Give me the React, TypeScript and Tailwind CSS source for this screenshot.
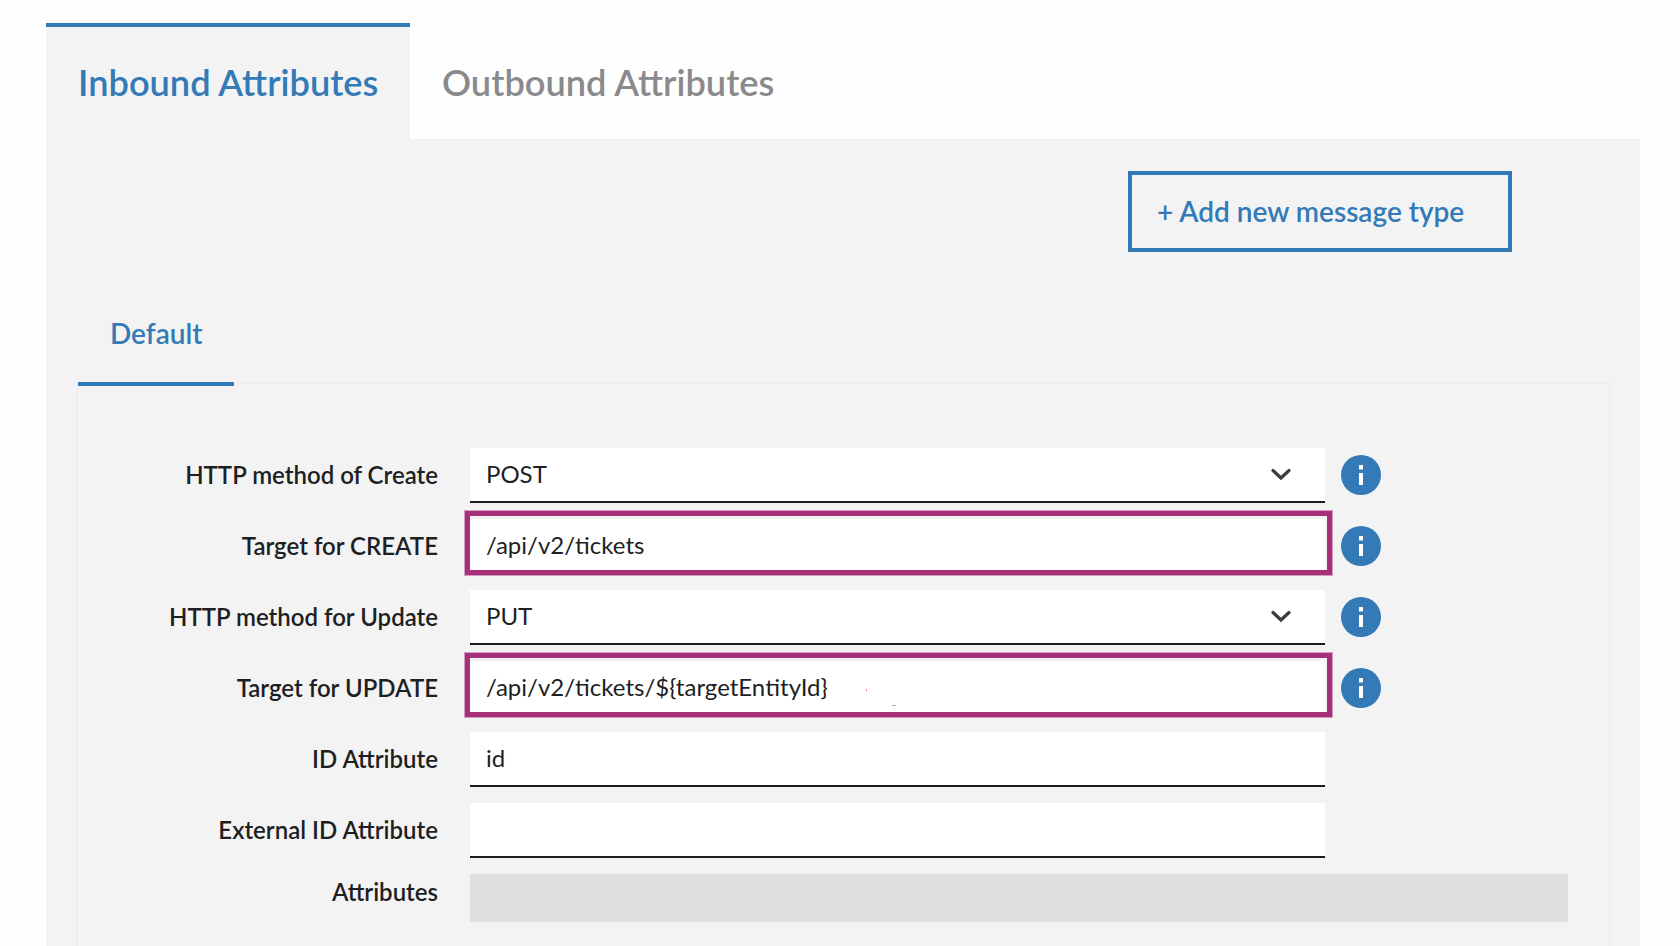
import { Fragment } from "react";

type Row = {
  label: string;
  value?: string;
  select?: boolean;
  info?: boolean;
  highlight?: boolean;
};

const rows: Row[] = [
  { label: "HTTP method of Create", value: "POST", select: true, info: true },
  { label: "Target for CREATE", value: "/api/v2/tickets", info: true, highlight: true },
  { label: "HTTP method for Update", value: "PUT", select: true, info: true },
  { label: "Target for UPDATE", value: "/api/v2/tickets/${targetEntityId}", info: true, highlight: true },
  { label: "ID Attribute", value: "id" },
  { label: "External ID Attribute" },
];

function Ligated({ text }: { text: string }) {
  const parts = text.split("ti");
  return (
    <>
      {parts.map((part, i) => (
        <Fragment key={i}>
          {i > 0 && <span className="[font-variant-ligatures:discretionary-ligatures]">ti</span>}
          {part}
        </Fragment>
      ))}
    </>
  );
}

function InfoIcon() {
  return (
    <svg width="40" height="40" viewBox="0 0 40 40" className="ml-4 shrink-0 -translate-y-px">
      <circle cx="20" cy="20" r="20" fill="#337ab7" />
      <rect x="18" y="10" width="4" height="4.5" fill="#fff" />
      <rect x="18" y="18" width="4" height="12" fill="#fff" />
    </svg>
  );
}

function Chevron() {
  return (
    <svg width="20" height="13" viewBox="0 0 20 13" fill="none" className="absolute left-[801px] top-[20px]">
      <path d="M2 2.5 L10 10 L18 2.5" stroke="#3d3d3d" strokeWidth="3.2" strokeLinecap="round" strokeLinejoin="miter" />
    </svg>
  );
}

function FormRow({ row }: { row: Row }) {
  return (
    <div className="flex items-center h-[55px] mb-4">
      <label className="w-[360px] shrink-0 -translate-y-px text-right text-[24px] font-semibold text-[#1d1f23] [font-variant-ligatures:discretionary-ligatures]">{row.label}</label>
      <div className="relative ml-8 w-[855px] h-full shrink-0 bg-white border-b-2 border-[#1a1b1f] flex items-center pl-4 text-[24px] text-[#1d1f23]">
        <span className="-translate-y-px">
          <Ligated text={row.value ?? ""} />
        </span>
        {row.select && <Chevron />}
        {row.highlight && (
          <div className="absolute -left-[5px] -right-[7px] -top-2 -bottom-[3px] border-[5px] border-[#a6317a] outline outline-1 outline-[#d49cc0]" />
        )}
      </div>
      {row.info && <InfoIcon />}
    </div>
  );
}

export default function App() {
  return (
    <div className="h-[946px] overflow-hidden bg-[#fefefe] pl-[46px] pr-10 pt-[23px] font-['Lato',sans-serif]">
      {/* Top tabs */}
      <div className="flex h-[116px]">
        <div className="w-[364px] border-t-4 border-[#337ab7] bg-[#f3f3f3] pl-[32px] pt-[31px] text-[36.2px] leading-[48px] font-semibold text-[#337ab7] [font-variant-ligatures:discretionary-ligatures]">
          Inbound Attributes
        </div>
        <div className="pl-[32px] pt-[35px] text-[36.2px] leading-[48px] font-semibold text-[#8a8a8d] [font-variant-ligatures:discretionary-ligatures]">Outbound Attributes</div>
      </div>

      <div className="h-[807px] bg-[#f3f3f3] pl-8 pr-[31px] pt-8">
        <div className="flex justify-end pr-[97px]">
          <button className="h-[81px] w-[384px] border-4 border-[#337ab7] pb-0.5 pl-[25px] text-left text-[28px] font-semibold text-[#337ab7]">
            + Add new message type
          </button>
        </div>

        {/* Message type tabs */}
        <div className="relative z-10 -mb-0.5 flex h-[134px] w-[156px] items-end border-b-4 border-[#337ab7] pb-[29px] pl-[32px] text-[28px] font-semibold leading-[40px] text-[#337ab7]">
          Default
        </div>

        <div className="relative h-[600px] pt-[64px] shadow-[0_0_3px_rgba(0,0,0,0.07)]">
          {rows.map((row) => (
            <FormRow key={row.label} row={row} />
          ))}
          <div className="flex items-start">
            <label className="w-[360px] shrink-0 text-right text-[24px] font-semibold text-[#1d1f23] [font-variant-ligatures:discretionary-ligatures]">Attributes</label>
            <div className="ml-8 h-12 w-[1098px] bg-[#dfdfdf]" />
          </div>
          {/* stray specks from the original capture */}
          <div className="absolute left-[788px] top-[305px] h-0.5 w-px bg-[#e77aa8]" />
          <div className="absolute left-[814px] top-[321px] h-px w-1 bg-[#b0b0b0]" />
        </div>
      </div>
    </div>
  );
}
